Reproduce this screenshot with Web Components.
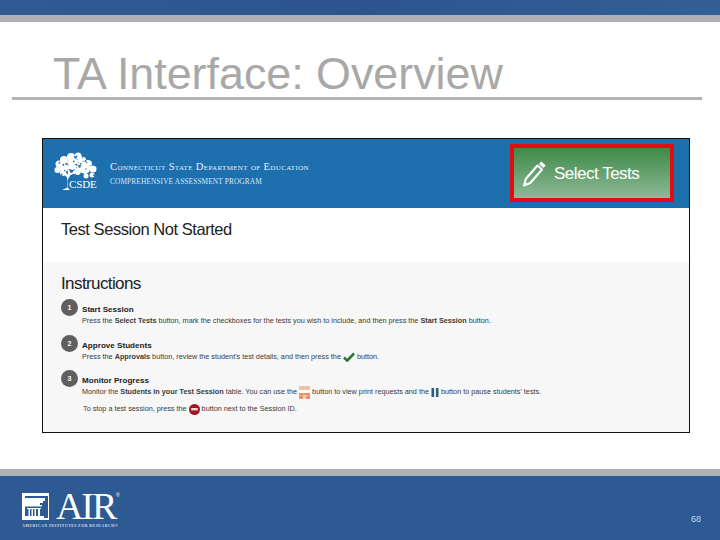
<!DOCTYPE html>
<html><head><meta charset="utf-8">
<style>
html,body{margin:0;padding:0;background:#fff}
body{width:720px;height:540px;overflow:hidden;font-family:"Liberation Sans",Arial,sans-serif}
</style></head><body>
<ta-slide>
  <ta-app>
    <ta-step slot="steps" n="1" heading="Start Session">Press the <b>Select Tests</b> button, mark the checkboxes for the tests you wish to include, and then press the <b>Start Session</b> button.</ta-step>
    <ta-step slot="steps" n="2" heading="Approve Students">Press the <b>Approvals</b> button, review the student's test details, and then press the <ta-glyph kind="check"></ta-glyph> button.</ta-step>
    <ta-step slot="steps" n="3" heading="Monitor Progress">Monitor the <b>Students in your Test Session</b> table. You can use the <ta-glyph kind="print"></ta-glyph> button to view print requests and the <ta-glyph kind="pause"></ta-glyph> button to pause students' tests.
      <span slot="extra">To stop a test session, press the <ta-glyph kind="stop"></ta-glyph> button next to the Session ID.</span></ta-step>
  </ta-app>
</ta-slide>
<script>
function def(name,html){
  customElements.define(name,class extends HTMLElement{
    connectedCallback(){
      if(this.shadowRoot)return;
      const r=this.attachShadow({mode:'open'});
      r.innerHTML=typeof html==='function'?html(this):html;
    }
  });
}
def('ta-slide',`<style>
:host{display:flex;flex-direction:column;width:720px;height:540px;background:#fff}
.top{height:15px;background:linear-gradient(90deg,#2f5a94,#2c5590 50%,#325f96);flex:none}
.gray{height:7px;background:#aeb0b3;flex:none}
h1{margin:0;padding:26px 0 0 53px;height:49px;font:400 44.8px/51px "Liberation Sans",Arial,sans-serif;color:#a8a8a8;white-space:nowrap;flex:none;box-sizing:content-box}
.rule{height:3px;margin:0 18px 0 12px;background:#b4b4b4;flex:none}
.main{flex:1;padding:38px 30px 36px 42px;min-height:0}
.foot{flex:none;height:71px;display:flex;flex-direction:column}
.fb{flex:1;background:#2d5a93;display:flex;justify-content:space-between;padding:17px 19px 0 22px;position:relative}
.num{font-size:9px;color:#c6d6ea;margin-top:21px}
</style>
<div class="top"></div><div class="gray"></div>
<h1>TA Interface: Overview</h1><div class="rule"></div>
<div class="main"><slot></slot></div>
<div class="foot"><div class="gray"></div><div class="fb"><air-logo></air-logo><span class="num">68</span></div></div>`);

def('air-logo',`<style>
:host{display:grid;grid-template-columns:27px auto;column-gap:7px;width:100px;height:36px;color:#fff;align-content:start}
svg{display:block;margin-top:0}
.a{font:400 38px/26px "Liberation Serif",serif;letter-spacing:-2.1px;height:27px;position:relative;white-space:nowrap}
sup{position:absolute;font:400 5px/5px "Liberation Sans",sans-serif;letter-spacing:0;left:60px;top:0}
.s{grid-column:1/3;font:700 3.9px/5px "Liberation Serif",serif;margin-top:4px;white-space:nowrap;letter-spacing:.46px;color:#d5deeb}
</style>
<svg width="27" height="27" viewBox="0 0 27 27"><rect width="27" height="27" fill="#fff"/>
<rect x="3" y="3" width="23" height="22" fill="#2d5a93"/>
<path d="M3 5H23V8H21V10H18V12H20V13.5H3Z" fill="#fff"/>
<path d="M5 15H19V16H18V23H16V16H14V23H12.5V16H11V23H9.5V16H8V23H6.5V16H5Z" fill="#fff"/>
<rect x="3" y="23" width="19" height="2" fill="#fff"/></svg>
<div class="a">AIR<sup>®</sup></div>
<div class="s">AMERICAN INSTITUTES FOR RESEARCH®</div>`);

def('ta-app',`<style>
:host{display:flex;flex-direction:column;width:648px;height:295px;box-sizing:border-box;border:1px solid #111;background:#fff;color:#222;overflow:hidden}
header{height:69px;flex:none;background:#1e6fae;display:flex;justify-content:space-between;padding:5px 15px 0 11px;box-sizing:border-box}
.status{height:54px;flex:none;background:#fff;font:400 16.5px/42px "Liberation Sans",sans-serif;padding-left:18px;letter-spacing:-.45px;box-sizing:border-box}
.ins{flex:1;background:#f7f7f7;padding:11px 0 0 18px}
h2{margin:0 0 5px;font:400 17px/21px "Liberation Sans",sans-serif;letter-spacing:-.6px;color:#222}
</style>
<header><csde-brand></csde-brand><select-btn></select-btn></header>
<div class="status">Test Session Not Started</div>
<div class="ins"><h2>Instructions</h2><slot name="steps"></slot></div>`);

let specks='';let seed=7;
const rnd=()=>{seed=(seed*9301+49297)%233280;return seed/233280};
for(let i=0;i<42;i++){const x=5+rnd()*36,y=3+rnd()*22;specks+=`<circle cx="${x.toFixed(1)}" cy="${y.toFixed(1)}" r="${(.45+rnd()*.55).toFixed(2)}"/>`}
def('csde-brand',`<style>
:host{display:flex;gap:13px;color:#fff;align-items:flex-start;padding-top:8px}
.t{padding-top:8px;font-family:"Liberation Serif",serif;white-space:nowrap}
.l1{font-size:10.6px;line-height:14px;font-variant:small-caps;letter-spacing:.35px;color:#e4eef7}
.l2{font-size:7.3px;line-height:15px;letter-spacing:.15px;color:#dbe8f3}
.tree{position:relative;width:43px;height:38px}
.tree span{position:absolute;left:15px;top:27px;font:400 11px/11px "Liberation Serif",serif;letter-spacing:-.1px}
svg{position:absolute;left:0;top:0}
</style>
<div class="tree"><svg width="43" height="39" viewBox="0 0 43 39" fill="#fff">
<g><circle cx="24" cy="4" r="3.5"/><circle cx="17" cy="5" r="4"/><circle cx="10" cy="8" r="4"/><circle cx="5" cy="12" r="3.5"/><circle cx="3.5" cy="18" r="3"/><circle cx="10" cy="15" r="5"/><circle cx="19" cy="12" r="6"/><circle cx="28" cy="9" r="4.5"/><circle cx="34" cy="12" r="4"/><circle cx="39" cy="17" r="3.5"/><circle cx="31" cy="17" r="5"/><circle cx="23" cy="19" r="4"/><circle cx="38" cy="23" r="2.5"/><circle cx="32" cy="24" r="2.5"/><circle cx="9" cy="21" r="3"/></g>
<g fill="#1e6fae">${specks}</g>
<path d="M8 38h8l-2-2-.5-8 3-5 8-3-1-1-7 2-2-5-1 .5.5 6-5-4-1 1 5 6 .5 10z"/></svg><span>CSDE</span></div>
<div class="t"><div class="l1">Connecticut State Department of Education</div><div class="l2">COMPREHENSIVE ASSESSMENT PROGRAM</div></div>`);

def('select-btn',`<style>
:host{display:flex;align-items:center;box-sizing:border-box;width:164px;height:58px;border:4px solid #e00e12;background:linear-gradient(#3f8a48,#8db998);color:#fff;font:400 17px/20px "Liberation Sans",sans-serif;letter-spacing:-.5px;padding:2px 0 0 9px}
svg{display:block;margin-right:8px;flex:none}
</style>
<svg width="23" height="26" viewBox="0 0 23 26" fill="#fff"><path d="M20.4 7 16 3 18.3.4 22.7 4.4Z"/><path d="M1 24.5 2.75 18 14.5 4.5 19 8.5 7.25 22Z" fill="none" stroke="#fff" stroke-width="2.1" stroke-linejoin="round"/><path d="M1 24.5 1.9 20.8 4.6 23.2Z"/></svg>Select Tests`);

def('ta-step',h=>`<style>
:host{display:grid;grid-template-columns:21px 1fr;height:35.5px;font-size:7.25px;line-height:11px;color:#3a3a3a;white-space:nowrap}
.n{width:17px;height:17px;border-radius:50%;background:#5f5f5f;color:#fff;font:700 7px/17px "Liberation Sans",sans-serif;text-align:center}
.h{font:700 8.1px/11px "Liberation Sans",sans-serif;color:#222;padding-top:5px}
::slotted(span){display:block;margin-top:4px;margin-left:1px}
</style>
<div class="n">${h.getAttribute('n')}</div><div><div class="h">${h.getAttribute('heading')}</div><div><slot></slot></div><slot name="extra"></slot></div>`);

def('ta-glyph',h=>{
 const k=h.getAttribute('kind');
 const s={check:`<svg width="12" height="10" viewBox="0 0 12 10"><path d="M1 5.5 4.2 8.6 11 1.5" fill="none" stroke="#2a7a33" stroke-width="2.6"/></svg>`,
 print:`<svg width="11" height="13" viewBox="0 0 11 13"><rect width="11" height="13" fill="#fbfbfb"/><rect x="0" y="0" width="11" height="4" fill="#efc0a6"/><rect x="0" y="7" width="11" height="2.5" fill="#e9926b"/><rect x="0" y="9.5" width="4" height="3.5" fill="#e9926b"/><rect x="7" y="9.5" width="4" height="3.5" fill="#e9926b"/><rect x="4" y="10" width="3" height="3" fill="#f3cdb8"/></svg>`,
 pause:`<svg width="8" height="9" viewBox="0 0 8 9"><rect x="0.5" width="2.6" height="9" fill="#2f5f7e"/><rect x="4.9" width="2.6" height="9" fill="#2f5f7e"/></svg>`,
 stop:`<svg width="11" height="11" viewBox="0 0 11 11"><circle cx="5.5" cy="5.5" r="5.5" fill="#a31621"/><rect x="2.2" y="4" width="6.6" height="2.4" fill="#f3d5d7"/></svg>`}[k];
 return `<style>:host{display:inline-block;vertical-align:middle;line-height:0}svg{display:block}</style>${s}`;
});
</script>
</body></html>
